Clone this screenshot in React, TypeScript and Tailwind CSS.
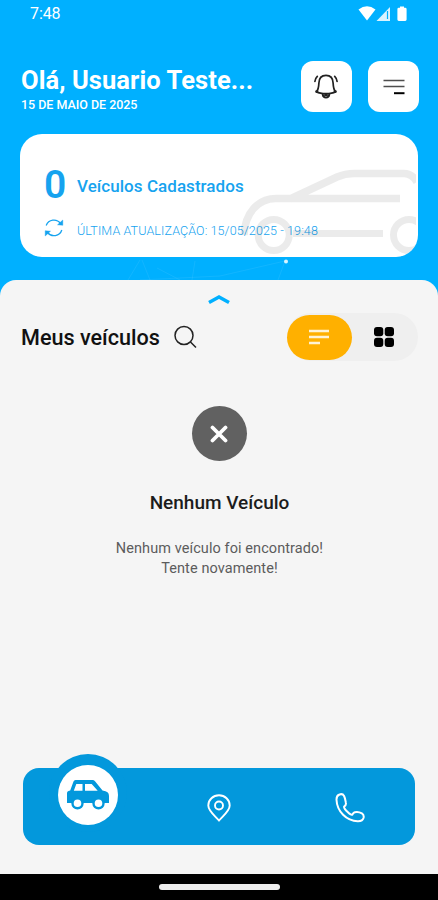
import type { ReactNode } from 'react';

const StatusBar = () => (
  <div className="flex h-7 items-center justify-between pl-[30px] pr-[30px] text-white">
    <span className="text-[16px] leading-7 tracking-[-0.1px]">7:48</span>
    <svg width="50" height="16" viewBox="0 0 50 16" fill="currentColor">
      <path d="M0.500 3.600Q9 -3 17.500 3.600L9 14.500Z" />
      <path d="M32 1V15H18.500Z" opacity=".85" />
      <path d="M29.500 5v8" stroke="#00b0ff" strokeWidth="1.2" />
      <path d="M42 .4h4v1.4h1.2q1.4 0 1.4 1.4v10.4q0 1.4-1.4 1.4h-6.4q-1.4 0-1.4-1.4V3.2q0-1.4 1.4-1.4H42Z" />
    </svg>
  </div>
);

const HeaderButton = ({ children }: { children: ReactNode }) => (
  <button className="flex h-[51px] w-[51px] items-center justify-center rounded-[12px] bg-white text-[#222]">
    {children}
  </button>
);

const Header = () => (
  <div className="mt-[33px] flex h-[51px] justify-between pl-[21px] pr-[19px] text-white">
    <div className="pt-[5px]">
      <h1 className="whitespace-nowrap text-[25.5px] font-bold leading-[29px] tracking-[0.07px]">Olá, Usuario Teste...</h1>
      <p className="text-[12.5px] font-medium leading-[19px] tracking-[-0.03px]">15 DE MAIO DE 2025</p>
    </div>
    <div className="flex gap-4">
      <HeaderButton>
        <svg className="-mt-px mr-px" width="24" height="25" viewBox="0 0 24 25" fill="none" stroke="currentColor" strokeWidth="1.700" strokeLinecap="round" strokeLinejoin="round">
          <path d="M2.500 17.800C4.600 15.500 4.700 13 4.900 9C5.100 4.200 7.700 1.400 12 1.400s6.900 2.800 7.100 7.600c.2 4 .3 6.500 2.400 8.800M2.500 17.800C5 19.300 8.500 19.700 12 19.700s7-.4 9.500-1.900" />
          <path d="M8.700 20.500c.3 2 1.500 3 3.300 3s3-1 3.300-3M11 21h2" strokeWidth="1.900" />
          <path d="M2.500 17.600h.6M20.900 17.600h.6" strokeWidth="2.600" />
          <path d="M.9 7.500c.2-2 .9-3.800 2.400-5.200M23.100 7.500c-.2-2-.9-3.800-2.400-5.200" />
        </svg>
      </HeaderButton>
      <HeaderButton>
        <svg className="-mt-px" width="22" height="18" viewBox="0 0 22 18" fill="none" stroke="currentColor">
          <path d="M.5 3.500h21M.5 9.500h21" strokeWidth="1.700" opacity=".8" />
          <path d="M11 16.200h10.500" strokeWidth="2" stroke="#000" />
        </svg>
      </HeaderButton>
    </div>
  </div>
);

const SummaryCard = () => (
  <div className="relative mx-[20px] mt-[22px] h-[123px] overflow-hidden rounded-[22px] bg-white text-[#16a3ef]">
    <div className="mt-[31px] flex h-[42px] items-center pl-[24px]">
      <span className="-mt-[2px] w-[33px] text-[39px] font-semibold leading-[42px]">0</span>
      <span className="text-[17px] font-medium leading-[20px] tracking-[0.05px]">Veículos Cadastrados</span>
    </div>
    <div className="mt-[10px] flex h-[22px] items-center pl-[24px]">
      <svg className="w-[20px] shrink-0" height="20" viewBox="0 0 20 20" fill="none" stroke="currentColor" strokeWidth="1.300">
        <path d="M2.200 7.500A8.200 8.200 0 0 1 16.500 5.500M17.800 12A8.200 8.200 0 0 1 3.500 14.500" />
        <path d="M18.800 2v5.300l-5.300-.5ZM1.200 18v-5.300l5.300.5Z" fill="currentColor" strokeWidth=".4" />
      </svg>
      <span className="ml-[13px] mt-[6px] whitespace-nowrap text-[12.5px] font-light tracking-[0.11px]">ÚLTIMA ATUALIZAÇÃO: 15/05/2025 - 19:48</span>
    </div>
    {/* car watermark, cut off at the right edge */}
    <svg className="absolute right-[2px] top-0" width="176" height="123" viewBox="240 134 176 123" fill="none" stroke="#000" strokeOpacity=".08">
      <path d="M244 235C245 213 258 198.500 276 198.500H400M290 199L337 177Q345 173.500 354 173.500H404Q412 173.500 417 182" strokeWidth="7.500" />
      <path d="M293 233.500H383" strokeWidth="7" />
      <circle cx="273.700" cy="235" r="15.500" strokeWidth="7" />
      <circle cx="409" cy="235" r="15.500" strokeWidth="7" />
    </svg>
  </div>
);

const Sheet = () => (
  <main className="flex flex-1 flex-col rounded-t-[16px] bg-[#f5f5f5]">
    <svg className="mx-auto mt-[13px]" width="22" height="12" viewBox="0 0 22 12" fill="none" stroke="#00b0ff" strokeWidth="3.500">
      <path d="M1 9.500 11 4l10 5.500" />
    </svg>
    <div className="mt-[8px] flex h-[48px] items-center pl-[21px] pr-[20px]">
      <h2 className="mt-[2px] text-[21.600px] font-medium leading-[26px] text-[#111]">Meus veículos</h2>
      <svg className="ml-[14px]" width="23" height="24" viewBox="0 0 23 24" fill="none" stroke="#222" strokeWidth="1.500">
        <circle cx="10" cy="10.500" r="9" />
        <path d="m16.500 17 5.500 5.500" />
      </svg>
      <div className="ml-auto flex h-[48px] w-[131px] items-center rounded-full bg-[#efefef]">
        <button className="flex h-[45px] w-[65px] items-center justify-center rounded-full bg-[#ffb000]">
          <svg className="mr-px" width="20" height="16" viewBox="0 0 20 16" stroke="#fff3d5" strokeWidth="2.400">
            <path d="M0 2h20M0 8h20M0 14h11" />
          </svg>
        </button>
        <button className="flex flex-1 items-center justify-center pr-[2px]">
          <svg width="20" height="20" viewBox="0 0 20 20">
            <rect width="9.300" height="9.300" rx="3" />
            <rect x="10.700" width="9.300" height="9.300" rx="3" />
            <rect y="10.700" width="9.300" height="9.300" rx="3" />
            <rect x="10.700" y="10.700" width="9.300" height="9.300" rx="3" />
          </svg>
        </button>
      </div>
    </div>

    <div className="mt-[45px] flex flex-col items-center pl-px text-center">
      <div className="flex h-[55px] w-[55px] items-center justify-center rounded-full bg-[#616161]">
        <svg className="mr-px" width="18" height="18" viewBox="0 0 18 18" stroke="#fff" strokeWidth="3.800" strokeLinecap="round">
          <path d="m2.500 2.500 13 13M15.500 2.500l-13 13" />
        </svg>
      </div>
      <h3 className="mt-[30px] text-[19px] font-medium leading-[24px] text-[#1c1c1c]">Nenhum Veículo</h3>
      <p className="mt-[24px] text-[14.500px] leading-[20px] tracking-[0.08px] text-[#5c5c5c]">
        Nenhum veículo foi encontrado!
        <br />
        Tente novamente!
      </p>
    </div>

    <BottomNav />
  </main>
);

const BottomNav = () => (
  <nav className="relative mx-[23px] mb-[29px] mt-auto grid h-[77px] grid-cols-3 items-center justify-items-center rounded-[16px] bg-[#0398dc] pt-[2px] text-white">
    <div className="absolute left-[26px] top-[-14px] flex h-[78px] w-[78px] items-center justify-center rounded-full bg-[#0398dc]">
      <div className="mt-[3px] flex h-[60px] w-[60px] items-center justify-center rounded-full bg-white">
        <svg width="42" height="30" viewBox="0 0 42 30">
          <path d="M8.500 0H25.500Q27 0 28 1.200L35.500 10.500Q39 11 40.500 12.300T42 16V23H0V13Q0 11.500 1.500 11L3.200 10.500 6.500 1.500Q7 0 8.500 0Z" fill="#0398dc" />
          <path d="M9.300 4h6.200v6.700H6.800ZM18 4h6.700l6 6.700H18Z" fill="#fff" />
          <circle cx="10.500" cy="23.300" r="5" fill="#fff" stroke="#0398dc" strokeWidth="2.400" />
          <circle cx="31.500" cy="23.300" r="5" fill="#fff" stroke="#0398dc" strokeWidth="2.400" />
        </svg>
      </div>
    </div>
    <span />
    <svg width="24" height="28" viewBox="0 0 24 28" fill="none" stroke="currentColor" strokeWidth="1.900">
      <path d="M12 26.500C8 21.800 1.300 17 1.300 11.500a10.700 10.200 0 0 1 21.400 0C22.700 17 16 21.800 12 26.500Z" />
      <circle cx="12" cy="11.500" r="4" />
    </svg>
    <svg width="30" height="30" viewBox="0 0 30 30" fill="none" stroke="currentColor" strokeWidth="2" strokeLinejoin="round">
      <path d="M4.500 1.500C2.500 2.200 1.400 4 1.500 6.800 2 18.500 11.500 28 22.700 28.200c3.200.1 5.200-.9 5.900-3.500.4-2-.2-3.400-1.700-4.300-2.200-1.300-5-1.700-7.100-1.200-1.200.3-1.800 1.300-2.500 2.400-1.500 1.200-8.800-6-8.200-8 1.700-1.100 2.200-2.200 1.700-4.100C10.300 7 10.100 5 9.100 3 8.200 1.400 6.300.8 4.500 1.500Z" />
    </svg>
  </nav>
);

export default function App() {
  return (
    <div className="flex h-[900px] w-[438px] flex-col overflow-hidden bg-[#00b0ff] font-['Roboto',sans-serif]">
      <StatusBar />
      <Header />
      <SummaryCard />
      <svg className="h-[23px] w-full shrink-0" viewBox="0 0 438 23" fill="none" stroke="#5cccff" strokeOpacity=".2">
        <path d="m285 4-65 15-80 4M285 4l-7 19M140 3l-12 20M142 3l8 20M157 11l23 12M195 4l-3 19" />
        <circle cx="286" cy="4.500" r="2" fill="#d9f4ff" stroke="none" />
      </svg>
      <Sheet />
      <div className="flex h-[26px] justify-center bg-black">
        <div className="mt-[10px] h-[6px] w-[121px] rounded-full bg-[#eee]" />
      </div>
    </div>
  );
}
